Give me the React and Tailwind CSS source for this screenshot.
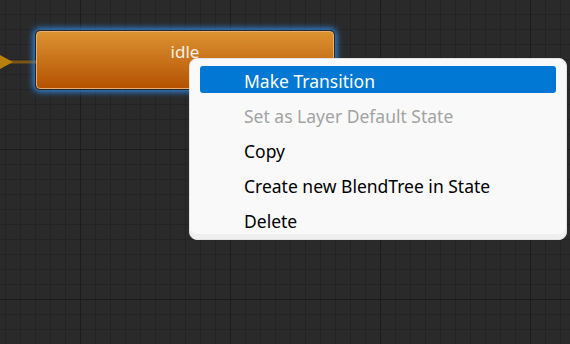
import React from 'react';

const items = [
    { label: 'Make Transition', active: true },
    { label: 'Set as Layer Default State', disabled: true },
    { label: 'Copy' },
    { label: 'Create new BlendTree in State' },
    { label: 'Delete' },
];

const gridStyle = {
    backgroundColor: '#2a2a2a',
    backgroundImage:
        'linear-gradient(to right, #1c1c1c 1px, transparent 1px), linear-gradient(to bottom, #1c1c1c 1px, transparent 1px), linear-gradient(to right, #232323 1px, transparent 1px), linear-gradient(to bottom, #232323 1px, transparent 1px)',
    backgroundSize: '150px 150px, 150px 150px, 15px 15px, 15px 15px',
    backgroundPosition: '80px 0, 0 149px, 5px 0, 0 14px',
};

const App = () => {
    return (
        <div
            className="relative w-[570px] h-[344px] overflow-hidden"
            style={{ ...gridStyle, fontFamily: '"Noto Sans", "Open Sans", sans-serif' }}
        >
            {/* incoming transition */}
            <svg className="absolute left-0 top-[54px]" width="40" height="16">
                <line x1="10" y1="8" x2="36" y2="8" stroke="#7a5410" strokeWidth="3" />
                <polygon points="0,1 13,8 0,15" fill="#b8800e" />
            </svg>

            {/* state node */}
            <div className="absolute left-[35px] top-[30px] w-[300px] h-[60px] rounded-[5px] p-[1px] shadow-[0_0_6px_2px_#2f86dc]">
                <div className="w-full h-full rounded-[4px] border border-[#e8b070] bg-gradient-to-b from-[#dc922f] to-[#b45200] flex justify-center">
                    <span className="text-[17px] text-[#f4f0ea] mt-[7px]">idle</span>
                </div>
            </div>

            {/* context menu */}
            <div className="absolute left-[189px] top-[58px] w-[378px] rounded-[8px] bg-[#f9f9f9] border border-[#e2e2e2] px-[10px] pt-[3px] pb-[2px] shadow-[inset_0_-5px_0_#efefef]">
                {items.map((item) => (
                    <div key={item.label} className="h-[35px] flex items-center">
                        <div
                            className={
                                item.active
                                    ? 'w-full h-[27px] rounded-[3px] bg-[#0078d4] text-white flex items-center pl-[44px]'
                                    : 'w-full h-[27px] flex items-center pl-[44px] ' +
                                      (item.disabled ? 'text-[#a3a3a3]' : 'text-black')
                            }
                        >
                            <span className="text-[17.5px] leading-none pt-[4px]">{item.label}</span>
                        </div>
                    </div>
                ))}
            </div>
        </div>
    );
};

export default App;
